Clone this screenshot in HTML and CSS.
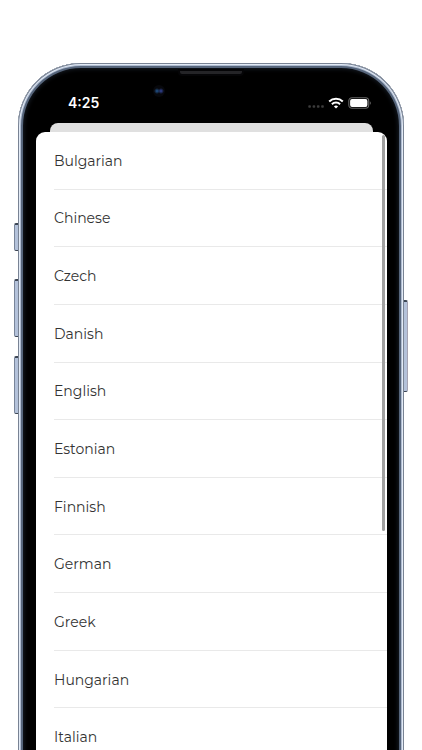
FILE: index.html
```
<!DOCTYPE html>
<html lang="en">
<head>
  <meta charset="UTF-8" />
  <meta name="viewport" content="width=device-width, initial-scale=1.0"/>
  <title>Select Language</title>
  <link rel="stylesheet" href="styles.css">
</head>
<body>

  <div class="phone">
    <span class="side-key key-mute"></span>
    <span class="side-key key-up"></span>
    <span class="side-key key-down"></span>
    <span class="side-key key-power"></span>
    <span class="speaker"></span>
    <span class="camera"></span>

    <header class="status-bar">
      <time class="clock">4:25</time>
      <div class="status-icons">
        <svg class="cellular" width="16" height="12" viewBox="0 0 16 12" fill="#3c3c3c">
          <rect x="0.3" y="8.2" width="2.6" height="2.6" rx="0.8"/>
          <rect x="4.6" y="8.2" width="2.6" height="2.6" rx="0.8"/>
          <rect x="8.9" y="8.2" width="2.6" height="2.6" rx="0.8"/>
          <rect x="13.2" y="8.2" width="2.6" height="2.6" rx="0.8"/>
        </svg>
        <svg class="wifi" width="16" height="12" viewBox="0 0 16 12" fill="none" stroke="#fff" stroke-width="2">
          <path d="M1.2 4.5a9.7 9.7 0 0 1 13.6 0"/>
          <path d="M3.9 7.3a5.8 5.8 0 0 1 8.2 0"/>
          <path d="M8 11.6L5.9 9.5a3 3 0 0 1 4.2 0z" fill="#fff" stroke="none"/>
        </svg>
        <svg class="battery" width="24" height="12" viewBox="0 0 24 12">
          <rect x="0.8" y="0.8" width="19.9" height="10.4" rx="3.2" fill="none" stroke="#666" stroke-width="1.1"/>
          <rect x="2.1" y="2.1" width="17.3" height="7.8" rx="1.9" fill="#fff"/>
          <path d="M21.8 4.2c1.4.5 1.4 3.1 0 3.6z" fill="#666"/>
        </svg>
      </div>
    </header>

    <div class="back-sheet"></div>
    <main class="sheet">
      <ul class="languages">
        <li><button type="button">Bulgarian</button></li>
        <li><button type="button">Chinese</button></li>
        <li><button type="button">Czech</button></li>
        <li><button type="button">Danish</button></li>
        <li><button type="button">English</button></li>
        <li><button type="button">Estonian</button></li>
        <li><button type="button">Finnish</button></li>
        <li><button type="button">German</button></li>
        <li><button type="button">Greek</button></li>
        <li><button type="button">Hungarian</button></li>
        <li><button type="button">Italian</button></li>
      </ul>
      <span class="scroll-thumb"></span>
    </main>
  </div>

</body>
</html>
```
FILE: styles.css
```
* {
  box-sizing: border-box;
}

body {
  margin: 0;
  height: 100vh;
  padding: 63px 18px 0;
  overflow: hidden;
  background: #fff;
  font-family: Montserrat, Inter, "Liberation Sans", sans-serif;
}

.phone {
  position: relative;
  padding: 30px 17px 20px 18px;
  border-radius: 63px 63px 0 0;
  background: #000;
  box-shadow:
    inset 0 0 0 1px #798394,
    inset 0 0 0 2px #e3ebf6,
    inset 0 0 0 3px #aebbd0,
    inset 0 0 0 5px #56657b,
    inset 0 0 4px 6px #161c25;
}

/* hardware keys on the edges of the case */
.side-key {
  position: absolute;
  left: -4px;
  width: 4px;
  border: 1px solid #79859a;
  border-top: 2px solid #3d4654;
  border-bottom-color: #3d4654;
  border-right: 0;
  border-radius: 2px 0 0 2px;
  background: #b4c2da;
}

.key-mute {
  top: 160px;
  height: 28px;
}

.key-up {
  top: 216px;
  height: 58px;
}

.key-down {
  top: 293px;
  height: 58px;
}

.key-power {
  top: 237px;
  left: auto;
  right: -4px;
  height: 92px;
  border-right: 1px solid #a5a3b3;
  border-left: 0;
  border-radius: 0 2px 2px 0;
}

.speaker {
  position: absolute;
  top: 6px;
  left: 50%;
  width: 66px;
  height: 7px;
  margin-left: -33px;
  border: 2px solid #050507;
  border-radius: 0 0 4px 4px;
  background: #242427;
}

.camera {
  position: absolute;
  top: 22px;
  left: 135px;
  width: 12px;
  height: 12px;
  border-radius: 50%;
  background:
    radial-gradient(circle at 4px 6px, #245893 0, transparent 3px),
    radial-gradient(circle at 8px 6px, #34469c 0, transparent 3px),
    #07080c;
}

.status-bar {
  display: flex;
  justify-content: space-between;
  align-items: center;
  height: 20px;
  padding: 0 15px 0 32px;
  color: #fff;
}

.clock {
  font-family: Inter, "Liberation Sans", sans-serif;
  font-size: 14px;
  font-weight: 600;
  line-height: 20px;
}

.status-icons {
  display: flex;
  align-items: center;
  gap: 4px;
}

.back-sheet {
  height: 9px;
  margin: 10px 14px 0;
  border-radius: 8px 8px 0 0;
  background: #e0e0e0;
}

.sheet {
  position: relative;
  border-radius: 9px 9px 0 0;
  background: #fff;
}

.languages {
  display: grid;
  grid-auto-rows: 1fr;
  height: 634px;
  margin: 0;
  padding: 0 0 0 18px;
  list-style: none;
}

.languages li {
  border-bottom: 1px solid #e9e9e9;
}

.languages button {
  width: 100%;
  height: 100%;
  padding: 1px 0 0;
  border: 0;
  background: none;
  color: #333;
  font-family: inherit;
  font-size: 14px;
  font-weight: 400;
  text-align: left;
  cursor: pointer;
}

.scroll-thumb {
  position: absolute;
  top: 3px;
  right: 2px;
  width: 3px;
  height: 396px;
  border-radius: 2px;
  background: #a0a0a0;
}
```
